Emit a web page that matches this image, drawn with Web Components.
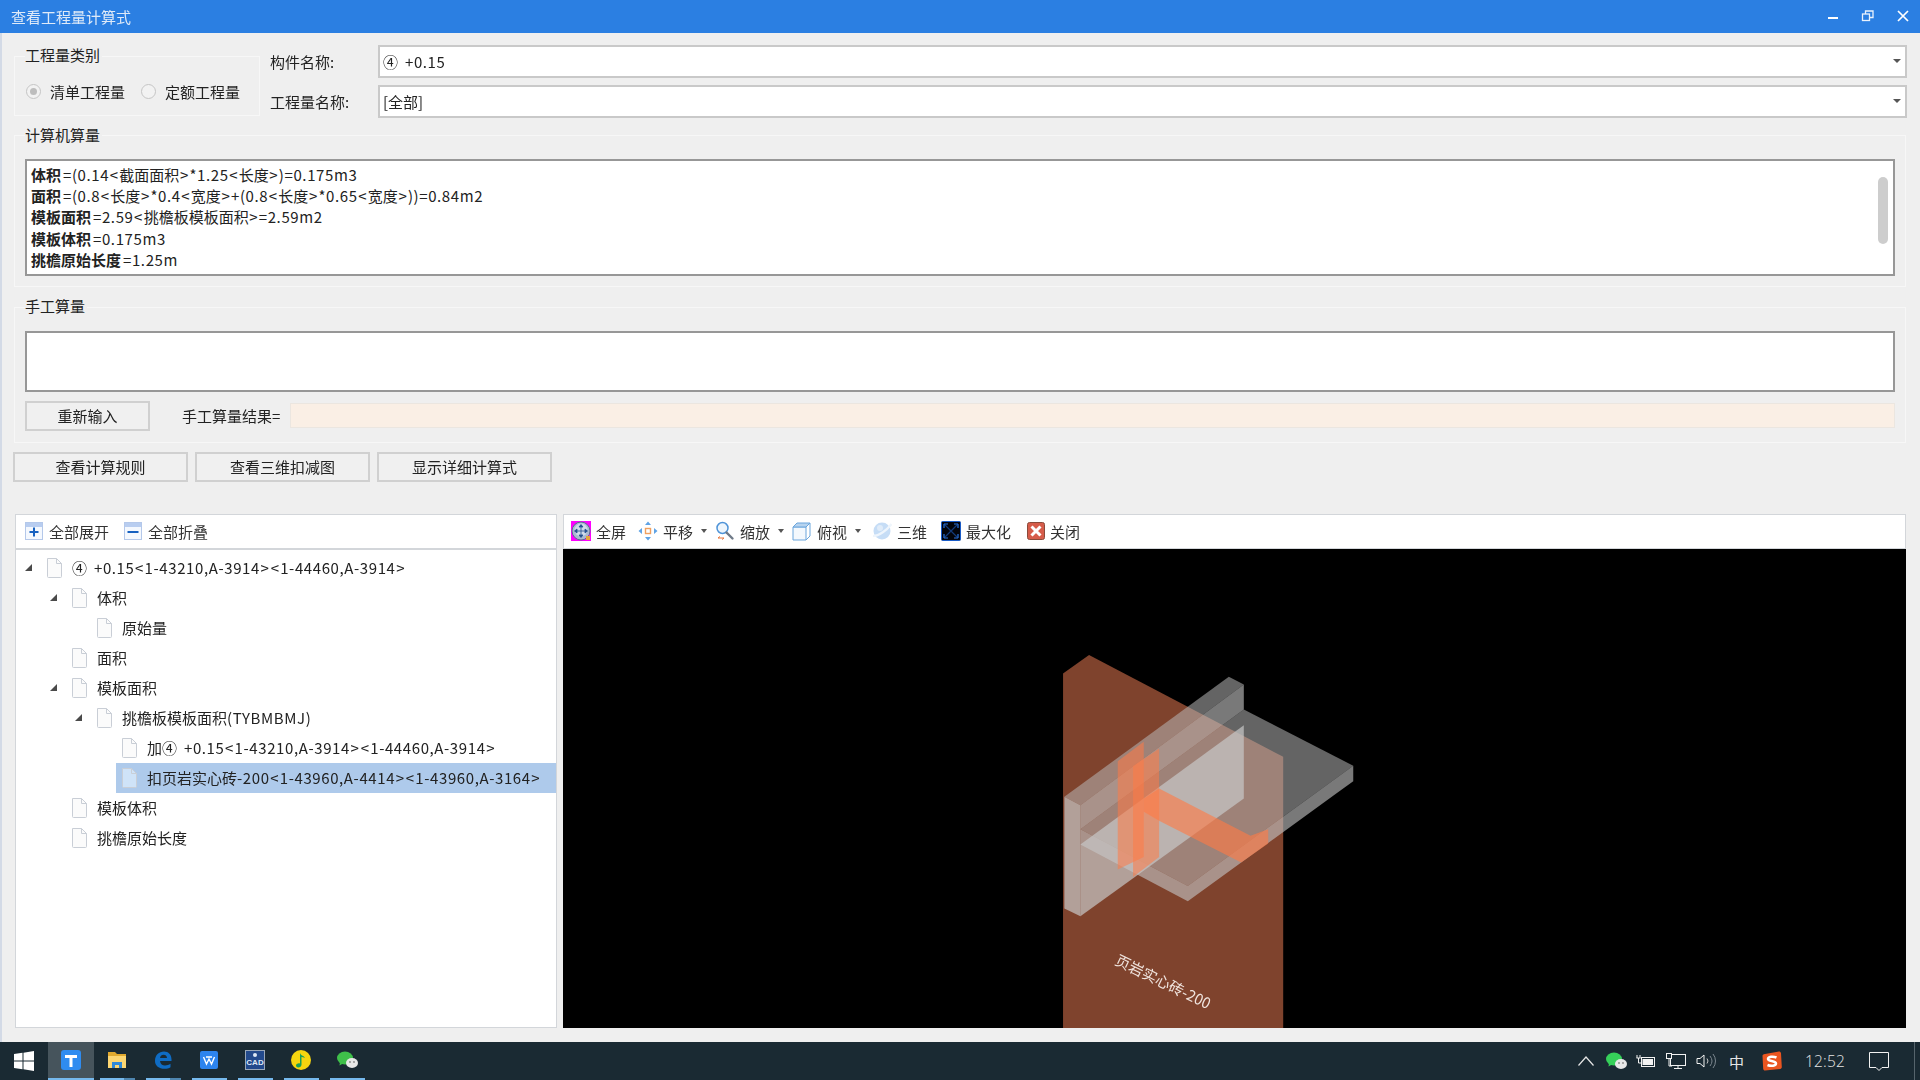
<!DOCTYPE html>
<html lang="zh">
<head>
<meta charset="utf-8">
<title>查看工程量计算式</title>
<style>
  html, body { margin: 0; height: 100%; overflow: hidden; }
  body { font-family: "Noto Sans CJK SC", "Noto Sans", sans-serif; font-size: 15px; color: #222; background: #efefef; }
  .stack { display: flex; flex-direction: column; height: 1080px; }
</style>
</head>
<body>
<div class="stack">
  <quantity-window></quantity-window>
  <task-bar></task-bar>
</div>

<script>
// small helper so every element below stays short
const makeEl = (name, css, html) => {
  customElements.define(name, class extends HTMLElement {
    constructor() {
      super();
      this.attachShadow({ mode: 'open' });
      this.shadowRoot.innerHTML = `<style>${css}</style>${typeof html === 'function' ? html(this) : html}`;
    }
  });
};

// latin runs are a bit wider in the original font, so space them out
const L = str => str.replace(/[\x20-\x7e]+/g, run => {
  const safe = run.replace(/[<>]/g, ch => `<span class="a">${ch === '<' ? '&lt;' : '&gt;'}</span>`);
  return `<span class="n">${safe}</span>`;
}).replace(/④/g, '<span class="c">④</span>');

const ICONS = {
  fit: `<svg width="20" height="20" viewBox="0 0 20 20"><rect width="20" height="20" fill="#f0f"/><circle cx="10" cy="10" r="9" fill="#a9b9d2" stroke="#5b6f8c"/><circle cx="10" cy="9" r="6.5" fill="#cfdaea"/><path d="M10 4v12M4 10h12M10 3.500l-2 2.500h4zM10 16.500l-2-2.500h4zM3.500 10l2.500-2v4zM16.500 10l-2.500-2v4z" fill="#25508f" stroke="#25508f" stroke-width=".8"/><rect x="15" y="15" width="4" height="4" fill="#e8a33c"/></svg>`,
  pan: `<svg width="20" height="20" viewBox="0 0 20 20"><g fill="#5fa3e6"><path d="M10 .5l3 3.500h-6zM10 19.500L13 16H7zM.5 10L4 7v6zM19.500 10L16 7v6z"/></g><rect x="7.500" y="7.500" width="5" height="5" fill="#fff" stroke="#f0a060" stroke-width="1.400"/></svg>`,
  zoom: `<svg width="20" height="20" viewBox="0 0 20 20"><circle cx="7.500" cy="7" r="5.500" fill="#eef6fd" stroke="#4f94d8" stroke-width="1.500"/><path d="M11.500 11.500l6 6" stroke="#6f7a88" stroke-width="2.400" stroke-linecap="round"/><path d="M3 17h6M3 17l2-1.500M9 17l-2 1.500" stroke="#e8763c" fill="none"/></svg>`,
  top: `<svg width="20" height="20" viewBox="0 0 20 20"><path d="M1 6h13v13H1z" fill="#f3f8fd" stroke="#6aa5dc"/><path d="M1 6l4-4h13l-4 4z" fill="#b6d3ef" stroke="#6aa5dc"/><path d="M14 19l4-4V2" fill="none" stroke="#6aa5dc"/></svg>`,
  orbit: `<svg width="20" height="20" viewBox="0 0 20 20"><ellipse cx="10" cy="10" rx="8.500" ry="8.500" fill="#c6ddf6"/><path d="M1 15C7 15 15 9 19.500 3" fill="none" stroke="#eef5fc" stroke-width="2.200"/><circle cx="8" cy="7" r="3" fill="#e0ecf9"/></svg>`,
  maxi: `<svg width="20" height="20" viewBox="0 0 20 20"><rect x=".5" y=".5" width="19" height="19" rx="1" fill="#02040a" stroke="#1a5cc8"/><path d="M4 4l12 12M16 4L4 16" stroke="#133a78" stroke-width="1.200"/><path d="M3 3h4M3 3v4M17 3h-4M17 3v4M3 17h4M3 17v-4M17 17h-4M17 17v-4" stroke="#2a74e0" stroke-width="1.200"/></svg>`,
  close: `<svg width="18" height="18" viewBox="0 0 18 18"><rect x=".5" y=".5" width="17" height="17" rx="2" fill="#d65c4a" stroke="#8a4a3a"/><path d="M4.500 4.500l9 9M13.500 4.500l-9 9" stroke="#fff" stroke-width="3"/></svg>`,
  plus: `<svg width="18" height="18" viewBox="0 0 18 18"><rect x=".5" y=".5" width="17" height="17" fill="#f4f8fe" stroke="#b4c8ea"/><rect x="1" y="1" width="16" height="4" fill="#b8cdf0"/><path d="M9 5.500v9M4.500 10h9" stroke="#1560c0" stroke-width="2"/></svg>`,
  minus: `<svg width="18" height="18" viewBox="0 0 18 18"><rect x=".5" y=".5" width="17" height="17" fill="#f4f8fe" stroke="#b4c8ea"/><rect x="1" y="1" width="16" height="4" fill="#b8cdf0"/><path d="M3.500 10h11" stroke="#1560c0" stroke-width="2"/></svg>`
};

makeEl('title-bar', `
  :host { display: flex; align-items: center; height: 33px; background: #2b7fe2; color: #dfeaf8; padding: 0 9px 0 11px; font-size: 15px; }
  .t { flex: 1; filter: blur(.3px); }
  svg { display: block; margin-left: 19px; }
`, `<span class="t">查看工程量计算式</span>
  <svg width="16" height="16" viewBox="0 0 16 16"><path d="M3 10h10" stroke="#fff" stroke-width="2"/></svg>
  <svg width="16" height="16" viewBox="0 0 16 16" fill="none" stroke="#eaf2fc" stroke-width="1.300"><rect x="2.500" y="6" width="7" height="6.500"/><path d="M5.500 6V3h7.500v6.500H9.500"/></svg>
  <svg width="16" height="16" viewBox="0 0 16 16"><path d="M3 3l10 10M13 3L3 13" stroke="#fff" stroke-width="1.700"/></svg>`);

// titled frame, legend sits over the frame line
makeEl('group-box', `
  :host { display: block; position: relative; box-sizing: border-box; border: 1px solid #f7f7f7; padding: 23px 10px 0; }
  .legend { position: absolute; left: 10px; top: var(--legend-top, -14px); padding-right: 2px; line-height: 24px; background: #efefef; }
`, el => `<span class="legend">${el.getAttribute('legend')}</span><slot></slot>`);

makeEl('radio-opt', `
  :host { display: inline-flex; align-items: center; gap: 9px; }
  i { box-sizing: border-box; width: 15px; height: 15px; border-radius: 50%; border: 1px solid #c4c4c4; background: #f2f2f2; display: flex; align-items: center; justify-content: center; }
  b { width: 7px; height: 7px; border-radius: 50%; background: #bdbdbd; }
`, el => `<i>${el.hasAttribute('checked') ? '<b></b>' : ''}</i><span><slot></slot></span>`);

makeEl('combo-box', `
  :host { display: flex; align-items: center; box-sizing: border-box; height: 33px; background: #fff; border: 2px solid #c9c9c9; padding: 0 4px 0 3px; }
  span { flex: 1; }
  i { width: 0; height: 0; border: 4px solid transparent; border-top: 4px solid #555; border-bottom: 0; }
`, `<span><slot></slot></span><i></i>`);

makeEl('text-box', `
  :host { display: flex; box-sizing: border-box; background: #fff; border: 2px solid #979797; padding: 3px 4px; position: relative; line-height: 21.300px; }
  .bar { position: absolute; right: 5px; top: 16px; width: 10px; height: 67px; border-radius: 5px; background: #cdcdcd; }
`, el => `<div><slot></slot></div>${el.hasAttribute('scroll') ? '<div class="bar"></div>' : ''}`);

makeEl('win-button', `
  :host { display: flex; align-items: center; justify-content: center; box-sizing: border-box; height: 30px; border: 2px solid #d0d0d0; background: #f0f0f0; }
`, `<slot></slot>`);

makeEl('tool-item', `
  :host { display: inline-flex; align-items: center; gap: var(--g, 5px); color: #333; }
  svg { display: block; }
  .arr { width: 0; height: 0; border: 3.500px solid transparent; border-top: 4px solid #555; border-bottom: 0; margin-left: 3px; }
`, el => `${ICONS[el.getAttribute('icon')]}<span><slot></slot></span>${el.hasAttribute('menu') ? '<i class="arr"></i>' : ''}`);

makeEl('tool-strip', `
  :host { display: flex; align-items: center; box-sizing: border-box; height: 35px; background: #fff; border: 1px solid #d3d6da; }
`, `<slot></slot>`);

const DOC = fill => `<svg width="15" height="20" viewBox="0 0 15 20"><path d="M.5.500h9l5 5v13a1 1 0 0 1-1 1h-12a1 1 0 0 1-1-1z" fill="${fill}" stroke="#c9ced6"/><path d="M9.500.500v5h5" fill="none" stroke="#c9ced6"/></svg>`;

makeEl('tree-row', `
  :host { display: flex; height: 30px; align-items: center; padding-left: calc(var(--level) * 25px + 7px); white-space: nowrap; }
  .exp { width: 24px; flex: none; display: flex; }
  .exp i { width: 0; height: 0; border-left: 7px solid transparent; border-bottom: 7px solid #4a4a4a; margin-left: 2px; }
  .body { flex: 1; display: flex; align-items: center; gap: 10px; height: 30px; margin-left: -6px; padding-left: 6px; }
  :host([selected]) .body { background: #aecaeb; }
  svg { display: block; flex: none; }
`, el => `<style>:host{--level:${el.getAttribute('level') || 0}}</style>
  <span class="exp">${el.hasAttribute('open') ? '<i></i>' : ''}</span>
  <div class="body">${DOC(el.hasAttribute('selected') ? '#cfe3f8' : '#fbfbfb')}<span><slot></slot></span></div>`);

makeEl('tree-panel', `
  :host { display: flex; flex-direction: column; width: 542px; flex: none; }
  tool-strip { padding-left: 9px; }
  .rows { flex: 1; background: #fff; border: 1px solid #d3d6da; border-top: 0; padding-top: 4px; box-shadow: inset 0 1px 0 #d3d6da; }
`, `
  <tool-strip>
    <tool-item icon="plus" style="width:99px;--g:6px">全部展开</tool-item>
    <tool-item icon="minus" style="--g:6px">全部折叠</tool-item>
  </tool-strip>
  <div class="rows"><slot></slot></div>`);

makeEl('model-view', `
  :host { display: flex; flex-direction: column; flex: 1; }
  tool-strip { padding-left: 7px; }
  svg.scene { flex: 1; display: block; background: #000; min-height: 0; }
`, `
  <tool-strip>
    <tool-item icon="fit" style="margin-right:12px">全屏</tool-item>
    <tool-item icon="pan" menu style="margin-right:8px">平移</tool-item>
    <tool-item icon="zoom" menu style="margin-right:8px">缩放</tool-item>
    <tool-item icon="top" menu style="margin-right:11px">俯视</tool-item>
    <tool-item icon="orbit" style="margin-right:14px">三维</tool-item>
    <tool-item icon="maxi" style="margin-right:16px">最大化</tool-item>
    <tool-item icon="close">关闭</tool-item>
  </tool-strip>
  <svg class="scene" viewBox="563 549 1342 479" preserveAspectRatio="none">
    <g transform="translate(1000 630) scale(.33333)">
      <polygon points="188,130 266,75 848,380 848,1195 188,1195" fill="#7f432d"/>
      <!-- slab -->
      <polygon points="240,597 730,238 1058,407 562,767" fill="#b9b9b9" fill-opacity=".54"/>
      <polygon points="240,597 562,767 1058,407 1058,453 562,813 240,643" fill="#c4c4c4" fill-opacity=".62"/>
      <!-- upright -->
      <polygon points="192,500 685,140 730,163 240,525" fill="#b9b9b9" fill-opacity=".54"/>
      <polygon points="240,525 730,163 730,238 240,597" fill="#c4c4c4" fill-opacity=".62"/>
      <polygon points="240,643 730,285 730,505 240,858" fill="#c8c8c8" fill-opacity=".7"/>
      <polygon points="192,500 240,525 240,858 192,835" fill="#c8c8c8" fill-opacity=".7"/>
      <!-- wall through the slab -->
      <polygon points="352,393 430,335 430,680 352,718" fill="#ff7a46" fill-opacity=".55"/>
      <polygon points="398,408 476,355 476,680 398,740" fill="#ff7a46" fill-opacity=".55"/>
      <polygon points="430,505 476,475 750,617 803,597 803,640 722,697 476,572 430,545" fill="#ff7a46" fill-opacity=".62"/>
      <text transform="translate(346 990) rotate(26)" font-size="44.500" y="12" fill="#f0e4de" font-family="Noto Sans CJK SC, sans-serif">页岩实心砖-200</text>
    </g>
  </svg>`);

makeEl('quantity-window', `
  :host { display: flex; flex-direction: column; height: 1042px; box-sizing: border-box; border-left: 2px solid #d3dae6; background: #efefef; }
  title-bar { margin-left: -2px; }
  .content { flex: 1; display: flex; flex-direction: column; padding: 12px 14px 14px 12px; filter: blur(.3px); }
  .top { display: flex; height: 73px; margin-right: -1px; }
  .kind { width: 246px; height: 60px; margin: 11px 10px 0 0; flex: none; padding: 0; }
  .radios { display: flex; gap: 16px; padding: 25px 0 0 11px; }
  .radios radio-opt { line-height: 20px; }
  .form { flex: 1; display: grid; grid-template-columns: 108px 1fr; row-gap: 7px; align-items: center; }
  .calc { height: 152px; margin-top: 17px; --legend-top: -13px; }
  .calc text-box { height: 117px; }
  .manual { height: 136px; margin-top: 20px; }
  .manual text-box { height: 61px; }
  .entry { display: flex; align-items: center; margin-top: 9px; }
  .entry win-button { width: 125px; }
  .entry > span { margin-left: 32px; width: 108px; white-space: nowrap; }
  .entry .result { flex: 1; height: 25px; box-sizing: border-box; background: #faefe5; border: 1px solid #ebe6e0; }
  .actions { display: flex; gap: 7px; margin: 9px 0 0 -1px; }
  .actions win-button { width: 175px; }
  .panels { flex: 1; min-height: 0; display: flex; gap: 6px; margin: 32px 0 0 1px; }
  b { font-weight: 700; margin-right: 2px; }
  .n { letter-spacing: .6px; }
  .a { margin: 0 .6px; }
  .c { margin-right: 3px; }
`, `
  <title-bar></title-bar>
  <div class="content">
    <div class="top">
      <group-box class="kind" legend="工程量类别">
        <div class="radios">
          <radio-opt checked>清单工程量</radio-opt>
          <radio-opt>定额工程量</radio-opt>
        </div>
      </group-box>
      <div class="form">
        <span>构件名称:</span><combo-box>${L('④ +0.15')}</combo-box>
        <span>工程量名称:</span><combo-box>[全部]</combo-box>
      </div>
    </div>
    <group-box class="calc" legend="计算机算量">
      <text-box scroll>
        <b>体积</b>${L('=(0.14<截面面积>*1.25<长度>)=0.175m3')}<br>
        <b>面积</b>${L('=(0.8<长度>*0.4<宽度>+(0.8<长度>*0.65<宽度>))=0.84m2')}<br>
        <b>模板面积</b>${L('=2.59<挑檐板模板面积>=2.59m2')}<br>
        <b>模板体积</b>${L('=0.175m3')}<br>
        <b>挑檐原始长度</b>${L('=1.25m')}
      </text-box>
    </group-box>
    <group-box class="manual" legend="手工算量">
      <text-box></text-box>
      <div class="entry">
        <win-button>重新输入</win-button>
        <span>手工算量结果${L('=')}</span>
        <div class="result"></div>
      </div>
    </group-box>
    <div class="actions">
      <win-button>查看计算规则</win-button>
      <win-button>查看三维扣减图</win-button>
      <win-button>显示详细计算式</win-button>
    </div>
    <div class="panels">
      <tree-panel>
        <tree-row level="0" open>${L('④ +0.15<1-43210,A-3914><1-44460,A-3914>')}</tree-row>
        <tree-row level="1" open>体积</tree-row>
        <tree-row level="2">原始量</tree-row>
        <tree-row level="1">面积</tree-row>
        <tree-row level="1" open>模板面积</tree-row>
        <tree-row level="2" open>${L('挑檐板模板面积(TYBMBMJ)')}</tree-row>
        <tree-row level="3">${L('加④ +0.15<1-43210,A-3914><1-44460,A-3914>')}</tree-row>
        <tree-row level="3" selected>${L('扣页岩实心砖-200<1-43960,A-4414><1-43960,A-3164>')}</tree-row>
        <tree-row level="1">模板体积</tree-row>
        <tree-row level="1">挑檐原始长度</tree-row>
      </tree-panel>
      <model-view></model-view>
    </div>
  </div>`);

makeEl('task-app', `
  :host { display: flex; flex-direction: column; width: 46px; height: 38px; align-items: center; box-sizing: border-box; }
  :host([active]) { background: #46545c; }
  .ic { flex: 1; display: flex; align-items: center; justify-content: center; }
  svg { display: block; }
  .line { align-self: stretch; height: 2px; margin: 0 5px 0 6px; background: #76b9ed; display: flex; justify-content: flex-end; }
  :host([active]) .line { margin: 0; }
  :host([stacked]) .line i { width: 11px; background: #4f86b0; }
`, `<div class="ic"><slot></slot></div><div class="line"><i></i></div>`);

makeEl('task-bar', `
  :host { display: flex; align-items: center; height: 38px; background: #1a2a33; color: #e6e6e6; }
  .start { width: 48px; display: flex; justify-content: center; }
  .apps { display: flex; }
  .tray { margin-left: auto; display: flex; align-items: center; height: 38px; }
  .tray svg { display: block; flex: none; }
  .ime { font-size: 15px; width: 17px; text-align: center; }
  .clock { font: 300 15.500px "Open Sans", sans-serif; letter-spacing: .2px; }
  .edge { width: 1px; height: 38px; background: #56646c; margin-right: 5px; }
`, `
  <div class="start"><svg width="20" height="20" viewBox="0 0 20 20"><path d="M0 3l8.500-1.200v7.700H0zM9.500 1.700L20 0v9.500H9.500zM0 10.500h8.500v7.700L0 17zM9.500 10.500H20V20L9.500 18.300z" fill="#fff"/></svg></div>
  <div class="apps">
    <task-app active><svg width="20" height="20" viewBox="0 0 20 20"><rect width="20" height="20" rx="3" fill="#2f8cf0"/><path d="M4 5h12v3h-4.500v9h-3V8H4z" fill="#fff"/></svg></task-app>
    <task-app stacked><svg width="20" height="20" viewBox="0 0 20 20"><path d="M1 2h7l2 2h9v14H1z" fill="#e0a92f"/><path d="M1 6h18v12H1z" fill="#fcd672"/><path d="M5 18v-6h10v6h-3v-3H8v3z" fill="#2f88d8"/></svg></task-app>
    <task-app stacked><svg width="20" height="20" viewBox="0 0 20 20"><path d="M2 11C2 5 6 1.500 11 1.500c4.500 0 7.500 3 7.500 8v1.500H7c.3 3 2.500 4.500 5 4.500 2 0 4-.7 5.500-1.700v3.500c-1.500 1-3.700 1.500-6 1.500C6 18.800 2 15.800 2 11zm5-3h7c-.2-2-1.500-3.200-3.400-3.200C8.800 4.800 7.400 6 7 8z" fill="#0f6cc4"/></svg></task-app>
    <task-app><svg width="18" height="18" viewBox="0 0 18 18"><rect width="18" height="18" rx="2" fill="#2d84ee"/><path d="M3.500 6l3 7 2.500-5 2.500 5 3-7M6 6h6" fill="none" stroke="#fff" stroke-width="1.400"/></svg></task-app>
    <task-app><svg width="20" height="20" viewBox="0 0 20 20"><rect x=".5" y=".5" width="19" height="19" fill="#234a8c" stroke="#9aa8b8"/><text x="10" y="15" font-size="8" font-weight="700" text-anchor="middle" fill="#dfe9f5" font-family="Liberation Sans, sans-serif">CAD</text><circle cx="10" cy="5" r="2" fill="#dfe9f5"/></svg></task-app>
    <task-app><svg width="20" height="20" viewBox="0 0 20 20"><circle cx="10" cy="10" r="10" fill="#f5d50f"/><path d="M9 3c1 3 4 2.500 5 5-1.500-.7-3-1-3.500-1v7.500c0 1.700-1.500 3-3.300 3-1.400 0-2.200-.9-2.200-1.900 0-1.400 1.400-2.300 3-2.300.4 0 .7 0 1 .1z" fill="#19a058"/></svg></task-app>
    <task-app><svg width="21" height="18" viewBox="0 0 21 18"><ellipse cx="8" cy="7" rx="8" ry="6.500" fill="#3fc04a"/><path d="M3 11l-.5 3.500 3.500-2z" fill="#3fc04a"/><ellipse cx="15" cy="12" rx="6" ry="5" fill="#e8e8e8"/><circle cx="13" cy="11" r=".9" fill="#888"/><circle cx="17" cy="11" r=".9" fill="#888"/></svg></task-app>
  </div>
  <div class="tray">
    <svg width="16" height="10" viewBox="0 0 16 10" style="margin-right:12px"><path d="M.5 9.500L8 1l7.500 8.500" fill="none" stroke="#e6e6e6" stroke-width="1.200"/></svg>
    <svg width="21" height="18" viewBox="0 0 21 18" style="margin-right:9px"><ellipse cx="8" cy="7" rx="8" ry="6.500" fill="#36d05a"/><path d="M3 11l-.5 3.500 3.500-2z" fill="#36d05a"/><ellipse cx="15" cy="12" rx="6" ry="5" fill="#e8e8e8"/><circle cx="13" cy="11" r=".9" fill="#888"/><circle cx="17" cy="11" r=".9" fill="#888"/></svg>
    <svg width="20" height="14" viewBox="0 0 20 14" style="margin-right:10px" fill="none" stroke="#f2f2f2"><rect x="5.500" y="3.500" width="13" height="9"/><rect x="6.500" y="5" width="10.500" height="6" fill="#f2f2f2" stroke="none"/><path d="M1 1v3M4 1v3M0.500 4h4M2.500 4v5h3"/></svg>
    <svg width="20" height="16" viewBox="0 0 20 16" style="margin-right:10px" fill="none" stroke="#f2f2f2"><rect x="4.500" y="1.500" width="15" height="11"/><path d="M12 12.500v3M8 15.500h8"/><rect x=".5" y=".5" width="5" height="5" fill="#1a2a33"/><path d="M3 5.500V13H6"/></svg>
    <svg width="20" height="16" viewBox="0 0 20 16" style="margin-right:12px" fill="none"><path d="M1 5.500h3l4-3.500v12L4 10.500H1z" stroke="#f2f2f2"/><path d="M11 5.500a4 4 0 0 1 0 5" stroke="#c9c9c9"/><path d="M14 3a8 8 0 0 1 0 10" stroke="#7d8890"/><path d="M17 1a11 11 0 0 1 0 14" stroke="#7d8890"/></svg>
    <span class="ime">中</span>
    <svg width="20" height="20" viewBox="0 0 20 20" style="margin:0 23px 0 17px"><path d="M3 3l14-2.500c1 0 1.700.6 2 1.500l.8 14c0 1-.7 1.800-1.600 2L3 19.500c-1 0-1.600-.6-1.800-1.500L.5 5c0-1 .6-1.700 2.500-2z" fill="#ea5520"/><path d="M14.500 6.500C11 5 6 5.500 6 8c0 2.500 8 1.500 8 4.500 0 2.500-5 3-8.500 1.500" fill="none" stroke="#fff" stroke-width="2.500"/></svg>
    <span class="clock">12:52</span>
    <svg width="20" height="20" viewBox="0 0 20 20" style="margin:0 25px 0 24px" fill="none" stroke="#f2f2f2"><path d="M.5 1.500h19v15h-6.500L10 19.500 7 16.500H.5z"/></svg>
    <span class="edge"></span>
  </div>`);
</script>
</body>
</html>
